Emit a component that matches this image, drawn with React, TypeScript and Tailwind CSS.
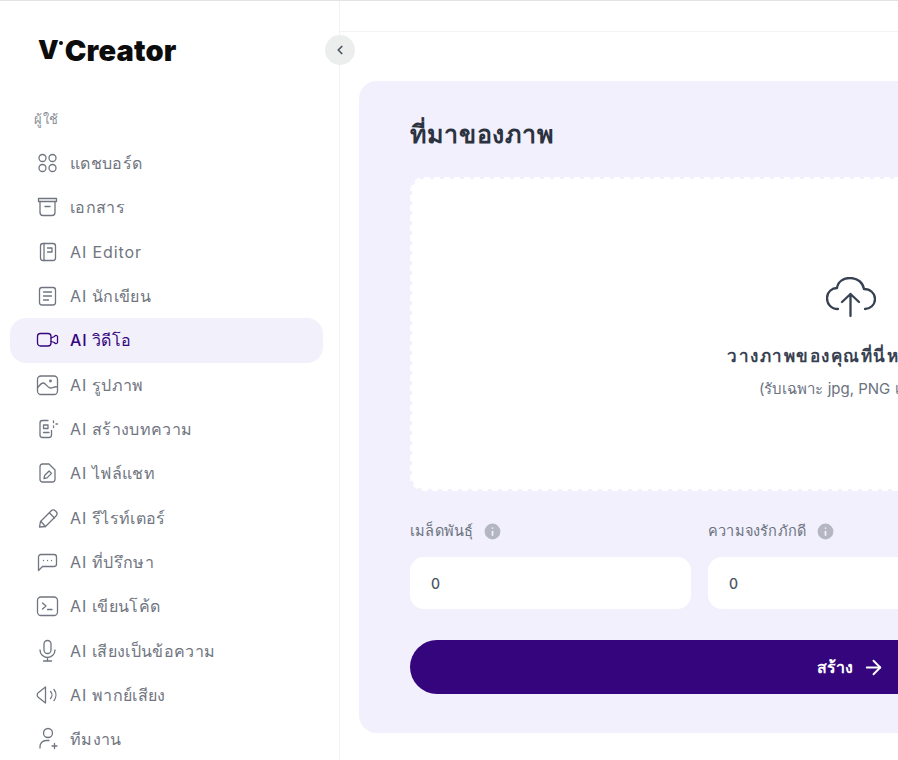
import { ArrowRight, ChevronLeft, Info } from "lucide-react";
import type { ReactNode } from "react";

function Icon({ children }: { children: ReactNode }) {
  return (
    <svg
      viewBox="0 0 24 24"
      fill="none"
      stroke="currentColor"
      strokeWidth="1.3"
      strokeLinecap="round"
      strokeLinejoin="round"
      className="w-[24px] h-[24px] shrink-0"
    >
      {children}
    </svg>
  );
}

const menu: { label: string; active?: boolean; icon: ReactNode }[] = [
  {
    label: "แดชบอร์ด",
    icon: (
      <>
        <circle cx="6.5" cy="7" r="3.5" />
        <circle cx="16.500" cy="7" r="3.5" />
        <circle cx="6.5" cy="17" r="3.5" />
        <circle cx="16.500" cy="17" r="3.5" />
      </>
    ),
  },
  {
    label: "เอกสาร",
    icon: (
      <>
        <path d="M2.500 3.500h18v3h-18z" />
        <path d="M4 6.500v11a3 3 0 0 0 3 3h9a3 3 0 0 0 3-3v-11" />
        <path d="M9 11.500h5" />
      </>
    ),
  },
  {
    label: "AI Editor",
    icon: (
      <>
        <rect x="4.500" y="3.500" width="15" height="17" rx="2.500" />
        <path d="M8 3.500v17" />
        <path d="M11.500 8h4.500v4h-4.500" />
      </>
    ),
  },
  {
    label: "AI นักเขียน",
    icon: (
      <>
        <rect x="3.500" y="3.500" width="16" height="17.500" rx="2.500" />
        <path d="M7.500 8h8M7.500 12h8M7.500 16h5" />
      </>
    ),
  },
  {
    label: "AI วิดีโอ",
    active: true,
    icon: (
      <>
        <rect x="1.500" y="5.500" width="13.500" height="12.500" rx="3" />
        <path d="M15 10l3.500-1.500a1.500 1.500 0 0 1 3 1v4a1.500 1.500 0 0 1-3 1L15 13.500" />
      </>
    ),
  },
  {
    label: "AI รูปภาพ",
    icon: (
      <>
        <rect x="1.500" y="3" width="20" height="18.500" rx="3.500" />
        <path d="M1.500 15c2-3 4-5 6-5s4 5 7 5 4-2 7-1" />
        <circle cx="14.500" cy="8" r="0.800" />
      </>
    ),
  },
  {
    label: "AI สร้างบทความ",
    icon: (
      <>
        <path d="M15.500 13.500V18a2.500 2.500 0 0 1-2.500 2.500H6.500A2.500 2.500 0 0 1 4 18V6a2.500 2.500 0 0 1 2.500-2.500H12" />
        <path d="M7.500 8h4.500v3.500H7.500zM7.500 15.500h5.500" />
        <path d="M17.500 4v1.500M17.500 9v1.500M20 7h1.500" />
      </>
    ),
  },
  {
    label: "AI ไฟล์แชท",
    icon: (
      <>
        <path d="M13 3H6.500A2.500 2.500 0 0 0 4 5.500v13A2.500 2.500 0 0 0 6.500 21h10a2.500 2.500 0 0 0 2.500-2.500V9z" />
        <path d="M8 17.500l.6-3 4.500-4.500 2.400 2.400-4.500 4.500z" />
      </>
    ),
  },
  {
    label: "AI รีไรท์เตอร์",
    icon: (
      <>
        <path d="M3.500 21l1-5.500L15 5a3.200 3.200 0 0 1 4.500 0l.5.5a3.200 3.200 0 0 1 0 4.500L9.500 20.500z" />
        <path d="M13.500 7l5 5M5 15.500l4.500 5" />
      </>
    ),
  },
  {
    label: "AI ที่ปรึกษา",
    icon: (
      <>
        <path d="M2.500 20.500V7a2.500 2.500 0 0 1 2.500-2.500h13A2.500 2.500 0 0 1 20.500 7v7a2.500 2.500 0 0 1-2.500 2.500H6.500z" />
        <path d="M7.500 10.500h.01M11.500 10.500h.01M15.500 10.500h.01" />
      </>
    ),
  },
  {
    label: "AI เขียนโค้ด",
    icon: (
      <>
        <rect x="1.500" y="3" width="20" height="18.500" rx="3.500" />
        <path d="M6.500 9l3.500 3-3.500 3M11.500 15.500h4.500" />
      </>
    ),
  },
  {
    label: "AI เสียงเป็นข้อความ",
    icon: (
      <>
        <rect x="8" y="1.500" width="7" height="13" rx="3.500" />
        <path d="M4 11a7.500 7.500 0 0 0 15 0M11.500 18.500v3.500M7.500 22h8" />
      </>
    ),
  },
  {
    label: "AI พากย์เสียง",
    icon: (
      <>
        <path d="M9.500 4v16L2.500 14.500a3 3 0 0 1 0-5z" />
        <path d="M14.500 8.500a5 5 0 0 1 0 7M18 6.500a9 9 0 0 1 0 11" />
      </>
    ),
  },
  {
    label: "ทีมงาน",
    icon: (
      <>
        <circle cx="12" cy="6" r="4.500" />
        <path d="M4 21v-1.500a6 6 0 0 1 6-6h3" />
        <path d="M18.500 16.500v5M16 19h5" />
      </>
    ),
  },
];

// the latin part of the labels runs wider than the thai part in the design
function MenuLabel({ label }: { label: string }) {
  const latin = label.match(/^AI( Editor)?/)?.[0] ?? "";
  return (
    <span className="tracking-[0.35px]">
      {latin && <span className="tracking-[0.9px]">{latin}</span>}
      {label.slice(latin.length)}
    </span>
  );
}

function Field({ label }: { label: string }) {
  return (
    <div>
      <div className="flex items-center gap-[9px] h-[24px] text-[14.5px] tracking-[0.2px] text-[#6b7280]">
        {label}
        <Info className="w-[21px] h-[21px] text-[#f1f0fc] fill-[#b4b7c2]" strokeWidth={2} />
      </div>
      <div className="mt-[14px] h-[52px] rounded-[14px] bg-white flex items-center px-[21px] text-[14px] font-medium text-[#4b5563]">
        0
      </div>
    </div>
  );
}

export default function App() {
  return (
    <div className="relative w-[898px] h-[760px] overflow-hidden flex bg-white border-t border-[#e2e3e6] font-['Inter','Noto_Sans',sans-serif]">
      <aside className="w-[340px] shrink-0 border-r border-[#f3f3f6] pl-[10px] pr-[16px]">
        <div className="flex items-center h-[24px] mt-[37px] ml-[28px]">
          <span className="text-[26px] leading-none font-black text-[#0c0c0c]">V</span>
          <span className="mb-[15px] w-[4px] h-[4px] rounded-full bg-[#0c0c0c]" />
          <span className="ml-[2px] text-[29px] leading-none font-black tracking-[0.2px] text-[#0c0c0c]">Creator</span>
        </div>
        <div className="mt-[47px] ml-[24px] text-[13px] leading-[20px] tracking-[0.5px] text-[#8b8f98]">ผู้ใช้</div>
        <nav className="mt-[12px]">
          {menu.map((item) => (
            <div
              key={item.label}
              className={`flex items-center gap-[10px] h-[44.33px] pl-[26px] rounded-[16px] text-[16px] ${
                item.active ? "bg-[#f1f0fb] text-[#35057d] font-medium" : "text-[#70757f]"
              }`}
            >
              <Icon>{item.icon}</Icon>
              <MenuLabel label={item.label} />
            </div>
          ))}
        </nav>
      </aside>

      {/* sits over the sidebar edge */}
      <button className="absolute left-[325px] top-[34px] w-[30px] h-[30px] rounded-full bg-[#eceded] flex items-center justify-center text-[#4b5563]">
        <ChevronLeft className="w-[14px] h-[14px]" strokeWidth={3} />
      </button>

      <main className="w-[1004px] shrink-0">
        <div className="h-[31px] border-b border-[#f3f3f6]" />
        <section className="mt-[49px] ml-[19px] w-[985px] h-[652px] rounded-[18px] bg-[#f1f0fc] px-[51px] pt-[37px]">
          <h2 className="text-[25px] leading-[32px] font-bold tracking-[0.9px] text-[#2b3240]">ที่มาของภาพ</h2>
          <div className="mt-[27px] h-[314px] w-[882px] rounded-[14px] bg-white bg-clip-padding border-2 border-dashed border-white flex flex-col items-center pt-[98px]">
            <svg
              viewBox="0 0 50 42"
              fill="none"
              stroke="currentColor"
              strokeWidth="2.300"
              strokeLinecap="round"
              strokeLinejoin="round"
              className="w-[50px] h-[42px] text-[#374151]"
            >
              <path d="M12 32C5 32 1 27 1 21C1 15 6 11 11 11C12 4 18 1 24 1C32 1 37 6 38 12C44 12 49 16 49 22C49 28 44 32 39 32" />
              <path d="M24.500 39V17M16 25L24.500 17L33 25" />
            </svg>
            <div className="mt-[24px] text-[17px] leading-[26px] font-semibold text-[#374151] tracking-[1.500px] whitespace-nowrap">
              วางภาพของคุณที่นี่หรือเรียกดู
            </div>
            <div className="mt-[10px] text-[15px] leading-[20px] text-[#6b7280] whitespace-nowrap">(รับเฉพาะ jpg, PNG เท่านั้น)</div>
          </div>
          <div className="mt-[28px] grid grid-cols-[281px_281px_1fr] gap-[17px] w-[882px]">
            <Field label="เมล็ดพันธุ์" />
            <Field label="ความจงรักภักดี" />
            <Field label="ขนาดภาพ" />
          </div>
          <button className="mt-[31px] w-[882px] h-[54px] rounded-full bg-[#35057d] flex items-center justify-center gap-[9px] text-white text-[16px] font-semibold">
            สร้าง
            <ArrowRight className="w-[23px] h-[23px]" strokeWidth={2} />
          </button>
        </section>
      </main>
    </div>
  );
}
